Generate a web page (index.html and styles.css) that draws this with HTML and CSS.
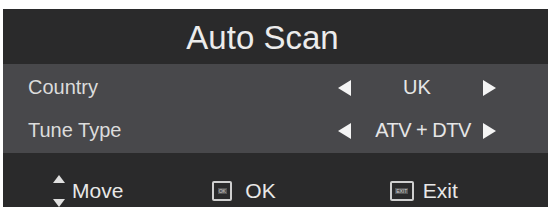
FILE: index.html
```html
<!DOCTYPE html>
<html lang="en">
<head>
  <meta charset="UTF-8">
  <title>Auto Scan</title>
  <link rel="stylesheet" href="styles.css">
</head>
<body>

<div class="panel">
  <div class="title">Auto Scan</div>

  <div class="menu">
    <div class="row">
      <div class="label">Country</div>
      <div class="choice">
        <svg class="arrow" viewBox="0 0 14 16"><polygon points="14,0 14,16 1,8" /></svg>
        <span class="value">UK</span>
        <svg class="arrow" viewBox="0 0 14 16"><polygon points="0,0 0,16 13,8" /></svg>
      </div>
    </div>
    <div class="row">
      <div class="label">Tune Type</div>
      <div class="choice">
        <svg class="arrow" viewBox="0 0 14 16"><polygon points="14,0 14,16 1,8" /></svg>
        <span class="value tight">ATV + DTV</span>
        <svg class="arrow" viewBox="0 0 14 16"><polygon points="0,0 0,16 13,8" /></svg>
      </div>
    </div>
  </div>

  <div class="hints">
    <div class="hint move">
      <svg class="updown" viewBox="0 0 12 32">
        <polygon points="6,0 12,8 0,8" />
        <polygon points="0,24 12,24 6,32" />
      </svg>
      <span>Move</span>
    </div>
    <div class="hint ok">
      <span class="key"><span class="key-txt">OK</span></span>
      <span>OK</span>
    </div>
    <div class="hint exit">
      <span class="key wide"><span class="key-txt">EXIT</span></span>
      <span>Exit</span>
    </div>
  </div>
</div>

</body>
</html>
```

FILE: styles.css
```css
body { margin: 0; background: #fff; font-family: "Liberation Sans", Arial, sans-serif; }
.panel { margin: 9px 3px 0 3px; background: #2a2a2b; color: #e4e4e4; }
.title { height: 55px; display: flex; align-items: center; justify-content: center; font-size: 33px; color: #ececec; padding: 2px 26px 0 0; box-sizing: border-box; }
.menu { background: #48484b; padding: 2px 0 1px; }
.row { height: 43px; display: flex; align-items: center; padding: 0 51px 0 25px; }
.label { flex: 1; font-size: 20px; color: #dcdcdc; }
.choice { display: flex; align-items: center; }
.arrow { width: 14px; height: 16px; fill: #f4f4f4; }
.value { width: 132px; text-align: center; font-size: 20px; color: #e6e6e6; }
.value.tight { letter-spacing: -0.5px; padding-left: 12px; box-sizing: border-box; }
.hints { height: 54px; display: flex; align-items: center; padding: 22px 0 0 50px; box-sizing: border-box; font-size: 21px; color: #e8e8e8; }
.hint { display: flex; align-items: center; }
.updown { width: 12px; height: 32px; fill: #e0e0e0; margin-right: 7px; }
.ok { margin-left: 89px; }
.exit { margin-left: 114px; }
.key { width: 16px; height: 16px; border: 2px solid #cfcfcf; border-radius: 2px; display: flex; align-items: center; justify-content: center; margin-right: 13px; }
.key.wide { width: 20px; margin-right: 9px; }
.key-txt { font-size: 5px; color: #cfcfcf; background: #555; padding: 0 1px; }
```
